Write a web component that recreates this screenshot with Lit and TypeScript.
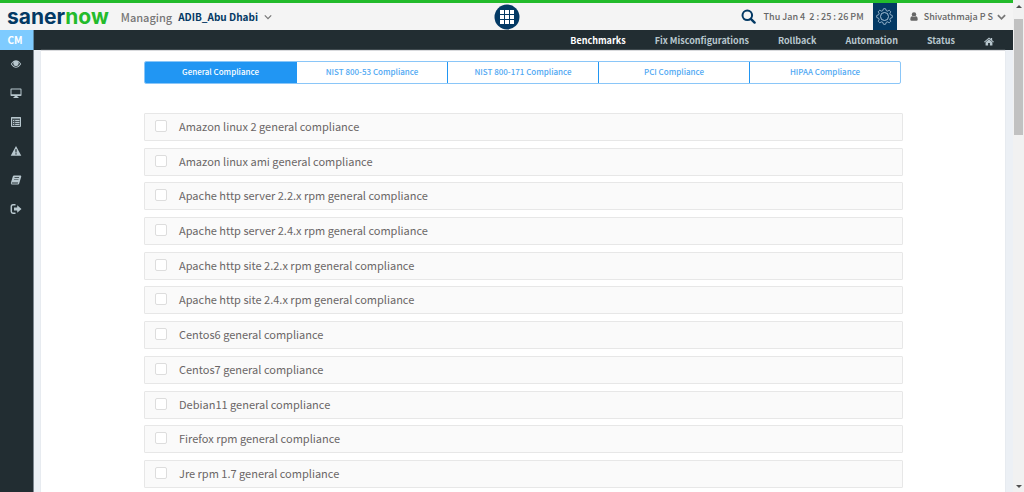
import { LitElement, html, css, svg } from "lit";
import { customElement, state } from "lit/decorators.js";

const TABS = [
  "General Compliance",
  "NIST 800-53 Compliance",
  "NIST 800-171 Compliance",
  "PCI Compliance",
  "HIPAA Compliance",
];

const BENCHMARKS = [
  "Amazon linux 2 general compliance",
  "Amazon linux ami general compliance",
  "Apache http server 2.2.x rpm general compliance",
  "Apache http server 2.4.x rpm general compliance",
  "Apache http site 2.2.x rpm general compliance",
  "Apache http site 2.4.x rpm general compliance",
  "Centos6 general compliance",
  "Centos7 general compliance",
  "Debian11 general compliance",
  "Firefox rpm general compliance",
  "Jre rpm 1.7 general compliance",
];

const NAV = ["Benchmarks", "Fix Misconfigurations", "Rollback", "Automation", "Status"];

const SIDE = [
  {
    label: "Visibility",
    icon: svg`<path fill="currentColor" fill-rule="evenodd" d="M0.8 6C2.6 3.2 4.4 2.2 6 2.2S9.4 3.2 11.2 6C9.4 8.8 7.6 9.8 6 9.8S2.6 8.8 0.8 6ZM1.9 6C3.2 7.9 4.6 8.8 6 8.8S8.8 7.9 10.1 6C9.6 5.2 9 4.6 8.4 4.1A2.7 2.7 0 1 1 3.6 4.1C3 4.6 2.4 5.2 1.9 6Z"/><circle cx="6" cy="5.5" r="2.2" fill="currentColor"/>`,
  },
  {
    label: "Devices",
    icon: svg`<path fill="currentColor" fill-rule="evenodd" d="M1.3 1.5H10.7Q11.5 1.5 11.5 2.3V8.2Q11.5 9 10.7 9H7.5V10H8.5V11H3.5V10H4.5V9H1.3Q0.5 9 0.5 8.2V2.3Q0.5 1.5 1.3 1.5ZM1.5 2.5V7.3H10.5V2.5Z"/>`,
  },
  {
    label: "Reports list",
    icon: svg`<path fill="currentColor" fill-opacity="0.25" stroke="currentColor" d="M1.5 1.5H10.5V10.5H1.5Z"/><path stroke="currentColor" stroke-width="1.2" d="M1 2H11M3 4.5H4.2M5.2 4.5H9.5M3 6.5H4.2M5.2 6.5H9.5M3 8.5H4.2M5.2 8.5H9.5"/>`,
  },
  {
    label: "Alerts",
    icon: svg`<path fill="currentColor" fill-rule="evenodd" d="M6 1L11.3 10.8H0.7ZM5.3 4.3L5.5 7.6H6.5L6.7 4.3ZM5.4 8.3V9.5H6.6V8.3Z"/>`,
  },
  {
    label: "Documentation",
    icon: svg`<path fill="currentColor" fill-rule="evenodd" d="M4 1.5H10.8L11.3 2.5L9.2 9.6Q9 10.5 8 10.5H1.8Q0.6 10.3 0.9 8.8L2.8 2.5Q3.1 1.5 4 1.5ZM4.6 3.2L4.4 3.9H8.9L9.1 3.2ZM4.1 4.9L3.9 5.6H8.4L8.6 4.9ZM1.9 8.5L1.7 9.4H7.8L8.1 8.5Z"/>`,
  },
  {
    label: "Sign out",
    icon: svg`<path fill="none" stroke="currentColor" stroke-width="1.5" d="M5.5 1.8H3Q1.3 1.8 1.3 3.5V8.5Q1.3 10.2 3 10.2H5.5"/><path fill="currentColor" d="M4 4.5H7.2V2.3L11.5 6L7.2 9.7V7.5H4Z"/>`,
  },
];

@customElement("app-root")
export class AppRoot extends LitElement {
  @state() private tab = 0;

  static styles = css`
    :host {
      display: flex;
      min-height: 100vh;
      overflow: hidden;
      background: #ecf0f5;
      font-family: "Noto Sans CJK SC", "Noto Sans", sans-serif;
      font-size: 11px;
      line-height: 16px;
      color: #6a6666;
    }
    * {
      box-sizing: border-box;
    }
    button {
      font: inherit;
      color: inherit;
      background: none;
      border: 0;
      padding: 0;
      margin: 0;
      cursor: pointer;
    }
    a {
      color: inherit;
      text-decoration: none;
    }
    svg {
      display: block;
    }
    .page {
      flex: 1;
      min-width: 0;
      display: flex;
      flex-direction: column;
    }
    .top {
      display: grid;
      grid-template-columns: 1fr auto 1fr;
      align-items: center;
      height: 30px;
      border-top: 3px solid #23bb2b;
      background: #f4f4f4;
    }
    .brand {
      display: flex;
      align-items: center;
      padding-left: 7px;
    }
    .logo {
      font: 700 21px/24px Inter, sans-serif;
      color: #033964;
      margin-right: 12px;
    }
    .logo .now {
      color: #23bb2b;
    }
    .managing {
      font-size: 11px;
      font-weight: 500;
      color: #777;
      margin-right: 6px;
    }
    .account {
      display: flex;
      align-items: center;
      gap: 6px;
      font-size: 10px;
      font-weight: 700;
      color: #033964;
    }
    .right {
      display: flex;
      align-items: center;
      justify-content: flex-end;
      height: 27px;
      padding-right: 7px;
      font-size: 9px;
      font-weight: 500;
      color: #666;
      white-space: nowrap;
    }
    .clock {
      margin: 0 9px 0 8px;
      white-space: pre;
    }
    .gear {
      display: grid;
      place-items: center;
      width: 24px;
      height: 27px;
      background: #033964;
      color: #a9c3d8;
      margin-right: 13px;
    }
    .user {
      display: flex;
      align-items: center;
      gap: 6px;
    }
    .user .caret {
      margin-left: -2px;
    }
    .bar {
      display: flex;
      height: 20px;
      background: #222d32;
      color: #b8c7ce;
    }
    .module {
      width: 34px;
      height: 20px;
      background: #7ecbff;
      border-right: 1px solid #5c8aa8;
      color: #fff;
      font-size: 10px;
      font-weight: 700;
      line-height: 20px;
      text-align: center;
      padding-right: 3px;
    }
    .nav {
      flex: 1;
      display: flex;
      justify-content: flex-end;
      align-items: center;
      gap: 29px;
      padding: 2px 19px 0 0;
      font-size: 9px;
      font-weight: 700;
      line-height: 18px;
    }
    .nav .current {
      color: #fff;
    }
    .body {
      flex: 1;
      display: flex;
    }
    .side {
      width: 34px;
      display: flex;
      flex-direction: column;
      align-items: center;
      gap: 17px;
      padding: 8px 1px 0 0;
      background: #222d32;
      color: #b8c7ce;
      border-right: 1px solid #7d8790;
    }
    .content {
      flex: 1;
      display: flex;
      flex-direction: column;
      margin: 0 8px 0 7px;
      padding: 10px 102px 4px 103px;
      background: #fff;
      border-top: 1px solid #d9dadd;
      box-shadow: 0 0 1px #ccd2da;
    }
    .tabs {
      display: grid;
      grid-template-columns: repeat(5, 1fr);
      height: 23px;
      margin: 0 2px 29px 0;
      border: 1px solid #8ac6f8;
      border-radius: 2px;
      overflow: hidden;
    }
    .tab {
      padding-bottom: 2px;
      font-size: 8px;
      font-weight: 500;
      line-height: 18px;
      color: #4fa8f3;
      border-left: 1px solid #2196f3;
    }
    .tab:first-child {
      border-left: 0;
    }
    .tab.active {
      background: #2196f3;
      color: #fff;
    }
    .list {
      flex: 1;
      display: flex;
      flex-direction: column;
      justify-content: space-between;
      gap: 6px;
      margin: 0;
      padding: 0;
      list-style: none;
    }
    .row {
      display: flex;
      align-items: center;
      gap: 12px;
      height: 28px;
      padding: 0 10px 2px;
      background: #fafafa;
      border: 1px solid #e7e7e7;
      border-radius: 1px;
    }
    .row input {
      appearance: none;
      width: 12px;
      height: 12px;
      margin: 0;
      background: #fff;
      border: 1px solid #ddd;
      border-radius: 2px;
    }
    .row input:checked {
      background: #2196f3;
    }
    .scroll {
      width: 11px;
      display: flex;
      flex-direction: column;
      align-items: center;
      justify-content: space-between;
      background: #f1f1f1;
    }
    .thumb {
      width: 9px;
      height: 116px;
      margin: 11px 0 auto;
      background: #c1c1c1;
    }
    .up,
    .down {
      border: 3px solid transparent;
      border-top-width: 0;
      border-bottom: 3px solid #505050;
      margin-top: 5px;
    }
    .down {
      border-bottom: 0;
      border-top: 3px solid #505050;
      margin: 0 0 4px;
    }
  `;

  private gearPath() {
    let d = "";
    for (let i = 0; i < 96; i++) {
      const a = (i / 96) * Math.PI * 2;
      const r = 7 + 0.9 * Math.tanh(2.5 * Math.cos(8 * a));
      d += `${i ? "L" : "M"}${(8.5 + r * Math.cos(a)).toFixed(2)} ${(8.5 + r * Math.sin(a)).toFixed(2)}`;
    }
    return d + "Z";
  }

  render() {
    return html`
      <div class="page">
        <header class="top">
          <div class="brand">
            <a class="logo" href="#">saner<span class="now">now</span></a>
            <span class="managing">Managing</span>
            <button class="account">
              ADIB_Abu Dhabi
              <svg width="8" height="8" viewBox="0 0 8 8" aria-hidden="true">
                <path d="M0.8 2.3L4 5.6L7.2 2.3" fill="none" stroke="#777" stroke-width="1.2" />
              </svg>
            </button>
          </div>
          <button aria-label="Applications">
            <svg width="26" height="26" viewBox="0 0 26 26">
              <circle cx="13" cy="13" r="12.5" fill="#033964" />
              ${[6, 11, 16].map((y) =>
                [6, 11, 16].map(
                  (x) => svg`<rect x=${x} y=${y} width="4" height="4" fill="#fff" />`
                )
              )}
            </svg>
          </button>
          <div class="right">
            <button aria-label="Search">
              <svg width="15" height="15" viewBox="0 0 15 15">
                <circle cx="6.3" cy="6.3" r="4.8" fill="none" stroke="#033964" stroke-width="2" />
                <path d="M9.8 9.8L13.6 13.6" stroke="#033964" stroke-width="2.4" stroke-linecap="round" />
              </svg>
            </button>
            <span class="clock">Thu Jan 4  2 : 25 : 26 PM</span>
            <button class="gear" aria-label="Settings">
              <svg width="17" height="17" viewBox="0 0 17 17" fill="none" stroke="currentColor">
                <path d=${this.gearPath()} />
                <circle cx="8.5" cy="8.5" r="4" />
              </svg>
            </button>
            <button class="user">
              <svg width="8" height="9" viewBox="0 0 8 9" fill="#666" aria-hidden="true">
                <circle cx="4" cy="2.4" r="2.2" />
                <path d="M0.3 7.5Q0.3 4.3 2.2 4.2Q4 5.6 5.8 4.2Q7.7 4.3 7.7 7.5Q7.6 8.7 6.5 8.7H1.5Q0.4 8.7 0.3 7.5Z" />
              </svg>
              Shivathmaja P S
              <svg class="caret" width="9" height="8" viewBox="0 0 9 8" aria-hidden="true">
                <path d="M0.9 2.2L4.5 5.8L8.1 2.2" fill="none" stroke="#777" stroke-width="1.8" />
              </svg>
            </button>
          </div>
        </header>
        <div class="bar">
          <a class="module" href="#">CM</a>
          <nav class="nav">
            ${NAV.map((n, i) => html`<a class=${i === 0 ? "current" : ""} href="#">${n}</a>`)}
            <a href="#" aria-label="Home">
              <svg width="10" height="9" viewBox="0 0 11 10" fill="currentColor">
                <path d="M5.5 0.5L7.5 2.2V1H9V3.5L11 5.2L10.3 6L5.5 2L0.7 6L0 5.2Z" />
                <path d="M5.5 2.5L9.3 5.7V9.5H6.5V6.8H4.5V9.5H1.7V5.7Z" />
              </svg>
            </a>
          </nav>
        </div>
        <div class="body">
          <nav class="side">
            ${SIDE.map(
              (s) => html`<a href="#" aria-label=${s.label}
                ><svg width="12" height="12" viewBox="0 0 12 12">${s.icon}</svg></a
              >`
            )}
          </nav>
          <main class="content">
            <div class="tabs">
              ${TABS.map(
                (t, i) => html`<button
                  class="tab ${i === this.tab ? "active" : ""}"
                  @click=${() => (this.tab = i)}
                >${t}</button>`
              )}
            </div>
            <ul class="list">
              ${BENCHMARKS.map(
                (b, i) => html`<li class="row">
                  <input type="checkbox" id="b${i}" /><label for="b${i}">${b}</label>
                </li>`
              )}
            </ul>
          </main>
        </div>
      </div>
      <div class="scroll" aria-hidden="true">
        <span class="up"></span><span class="thumb"></span><span class="down"></span>
      </div>
    `;
  }
}
